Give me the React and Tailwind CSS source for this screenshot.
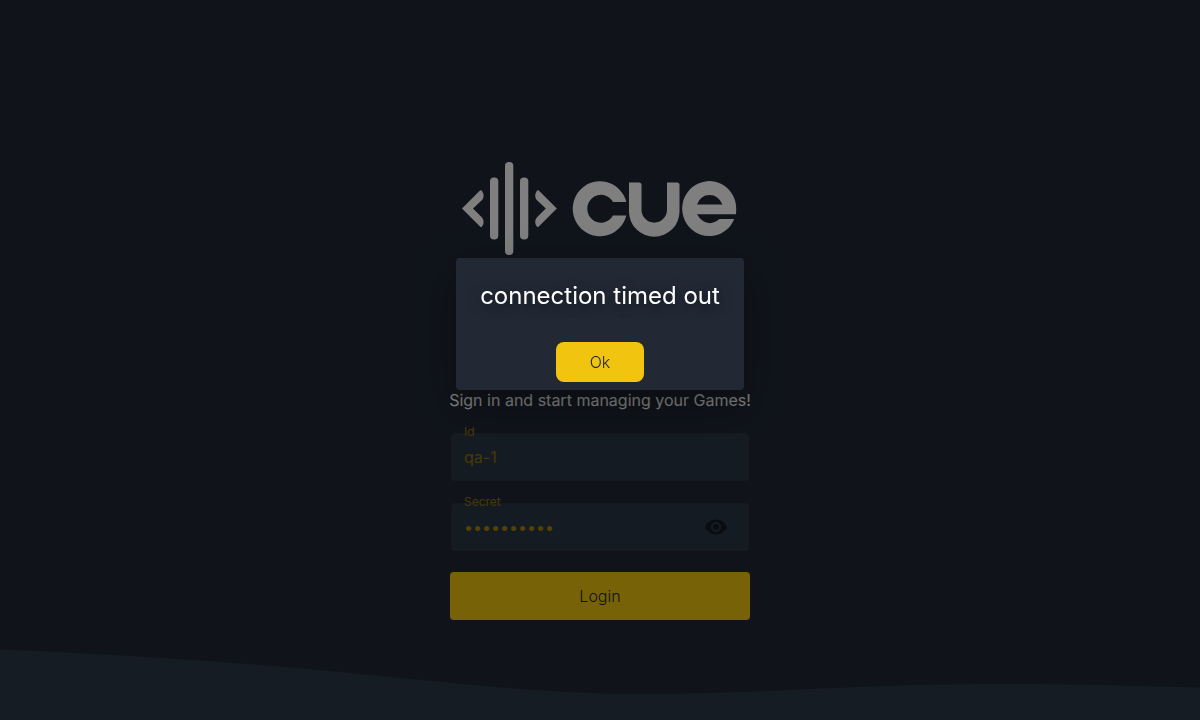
import { useState } from "react";

function Logo() {
  return (
    <svg viewBox="0 0 276 96" role="img" aria-label="cue" className="block h-24 w-[276px]" fill="#fff">
      <path d="M0 47.500 18 29.500Q19.400 28.600 20.300 30.400Q23.400 35.500 19.500 39.500L11 47.500 19.500 56Q23.400 60 20.300 65Q19.400 67 18 65.500Z" />
      <rect x="28" y="16.500" width="8.300" height="62" rx="4" />
      <rect x="43" y="1" width="8.300" height="93" rx="4" />
      <rect x="58" y="16.500" width="8.300" height="62" rx="4" />
      <path d="M94.800 47.500 76.800 29.500Q75.400 28.600 74.500 30.400Q71.400 35.500 75.300 39.500L83.800 47.500 75.300 56Q71.400 60 74.500 65Q75.400 67 76.800 65.500Z" />
      <path d="M164.300 41A27.200 27.500 0 1 0 164.300 54.500H151A13.700 14 0 1 1 151 41Z" />
      <path d="M167 21.500H177Q179.500 21.500 179.500 24V48.500A12.600 13 0 0 0 205 48.500V21.500H215Q217.500 21.500 217.500 24V50.500A25.250 25.250 0 0 1 167 50.500Z" />
      <path fillRule="evenodd" d="M273.900 53.200Q274.200 51 274.200 47.800A27 27.500 0 1 0 272.200 58H257.500Q247.500 66.500 238 57.500L235 53.200ZM235 43.500Q238.500 34 247.500 34T260.500 43.500Z" />
    </svg>
  );
}

function Field({ id, label, children }) {
  return (
    <div className="relative h-12 rounded border border-[#2a3543] bg-[#2a3745]">
      <label htmlFor={id} className="absolute -top-2 left-3 text-xs leading-3 text-[#8f730a]">
        {label}
      </label>
      <div className="flex h-full items-center">{children}</div>
    </div>
  );
}

export default function App() {
  const [open, setOpen] = useState(true);
  const [shown, setShown] = useState(false);
  return (
    <div className="relative flex min-h-screen flex-col items-center overflow-hidden bg-[#202935] font-[Inter,sans-serif] text-white">
      <svg
        viewBox="0 0 1200 72"
        preserveAspectRatio="none"
        aria-hidden="true"
        className="absolute bottom-0 left-0 h-[72px] w-full"
      >
        <path d="M0 1.500C110 6 240 14 350 25C480 38 560 46 640 46C770 46 850 36 1000 36C1080 36 1130 38 1200 39.500V72H0Z" fill="#2a3846" />
      </svg>

      <main className="relative flex w-full max-w-[302px] flex-col items-center pt-[161px]">
        <Logo />
        <h1 className="mt-[131px] text-base leading-6 font-normal whitespace-nowrap">
          Sign in and start managing your Games!
        </h1>
        <form className="mt-[21px] flex w-full flex-col gap-[21px] px-px" onSubmit={(e) => e.preventDefault()}>
          <div className="flex flex-col gap-[22px] px-px">
            <Field id="id" label="Id">
              <input
                id="id"
                defaultValue="qa-1"
                className="h-full w-full bg-transparent px-3 text-base text-[#8f730a] outline-none"
              />
            </Field>
            <Field id="secret" label="Secret">
              <input
                id="secret"
                type={shown ? "text" : "password"}
                defaultValue="abcdefghij"
                className="h-full min-w-0 flex-1 bg-transparent px-3 text-base text-[#a8850a] outline-none"
              />
              <button type="button" aria-label="Show secret" className="mr-5 size-6" onClick={() => setShown(!shown)}>
                <svg viewBox="0 0 24 24" className="size-6" fill="#14181f">
                  <path d="M12 4.500C7 4.500 2.730 7.610 1 12c1.730 4.390 6 7.500 11 7.500s9.270-3.110 11-7.500c-1.730-4.390-6-7.500-11-7.500zM12 17c-2.760 0-5-2.240-5-5s2.240-5 5-5 5 2.240 5 5-2.240 5-5 5zm0-8c-1.660 0-3 1.340-3 3s1.340 3 3 3 3-1.340 3-3-1.340-3-3-3z" />
                </svg>
              </button>
            </Field>
          </div>
          <button type="submit" className="h-12 w-full rounded bg-[#f1c40f] text-base font-light text-[#202935]">
            Login
          </button>
        </form>
      </main>

      {open && (
        <div className="fixed inset-0 flex items-start justify-center bg-black/50 pt-[258px]">
          <div
            role="alertdialog"
            aria-labelledby="message"
            className="flex flex-col items-center rounded bg-[#222935] px-6 pt-5 pb-2 shadow-[0_11px_15px_-7px_rgba(0,0,0,0.2),0_24px_38px_3px_rgba(0,0,0,0.14),0_9px_46px_8px_rgba(0,0,0,0.12)]"
          >
            <h2 id="message" className="text-2xl leading-9 font-normal [text-shadow:0_3px_12px_rgba(0,0,0,0.5)]">
              connection timed out
            </h2>
            <button
              type="button"
              onClick={() => setOpen(false)}
              className="mt-7 h-10 w-22 rounded-lg bg-[#f1c40f] text-base font-light text-[#202935]"
            >
              Ok
            </button>
          </div>
        </div>
      )}
    </div>
  );
}
